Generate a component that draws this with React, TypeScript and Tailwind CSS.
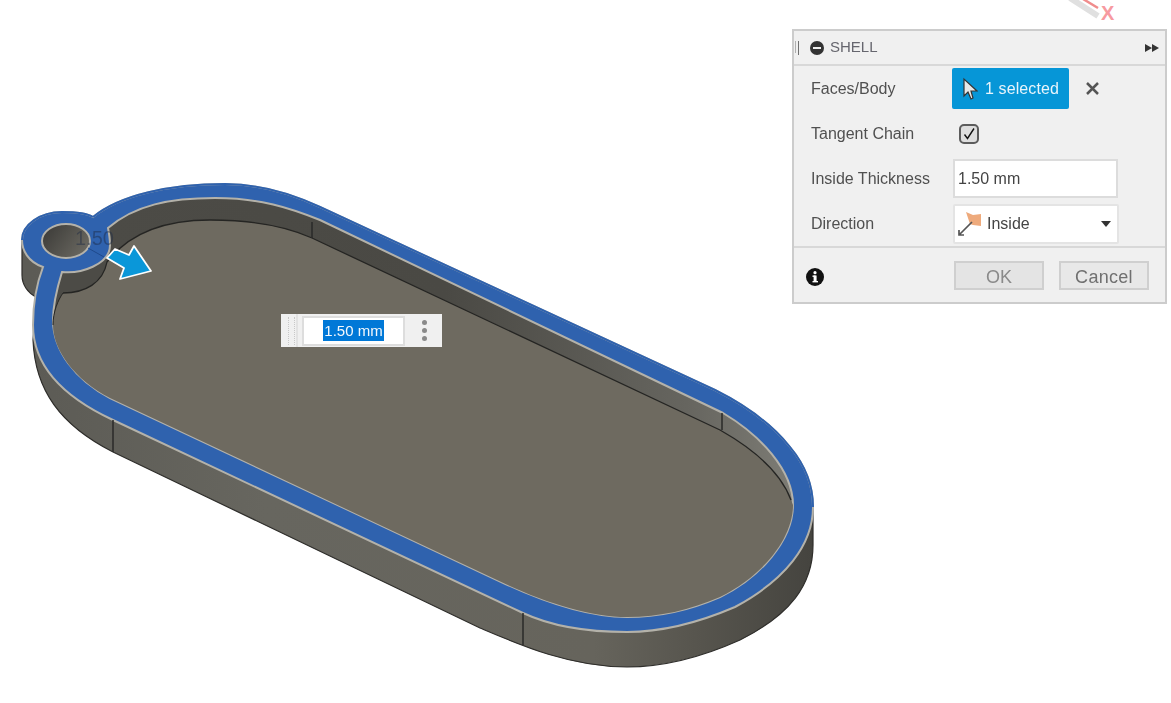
// App.tsx
const OUTER =
  "M93 217C120 195 170 184 225 184C260 184 290 193 320 207L715 390C745 405 770 422 790 447C805 465 813 485 813 507C813 545 785 580 735 607C700 622 665 632 627 632C590 632 555 628 523 613L113 420C70 400 33 370 33 325C33 300 38 280 43 267C28 262 22 250 22 240C22 225 40 212 62 212C75 212 87 213 93 217Z";
const INNER =
  "M108 228C135 205 170 198 215 198C260 198 290 208 320 220L723 413C760 435 793 470 793 505C793 540 760 578 720 597C690 610 660 617 627 617C590 617 545 603 497 580L110 398C75 380 53 350 53 320C53 305 58 285 62 272C80 274 110 265 110 245C110 238 109 233 108 228Z";
const FLOOR =
  "M53 325C53 312 58 300 63 293C85 293 103 283 107 262C130 232 165 220 210 220C250 220 285 226 312 238L720 430C750 447 780 470 793 505C793 540 760 578 720 597C690 610 660 617 627 617C590 617 545 603 497 580L110 398C75 380 53 350 53 325Z";
const WALL =
  "M22 240L22 275C22 285 28 293 36 297L33 340C35 390 60 425 113 452L480 628C520 645 570 667 627 667C660 667 700 658 740 640C790 615 813 585 813 545L813 507L400 300L60 220Z";

function KeyTag() {
  return (
    <svg className="absolute inset-0 blur-[0.6px]" width="1171" height="703" viewBox="0 0 1171 703">
      <defs>
        <linearGradient id="wall" gradientUnits="userSpaceOnUse" x1="30" y1="0" x2="813" y2="0">
          <stop offset="0" stopColor="#5c5b55" />
          <stop offset="0.3" stopColor="#67665f" />
          <stop offset="0.72" stopColor="#66645c" />
          <stop offset="0.85" stopColor="#57554e" />
          <stop offset="1" stopColor="#45443f" />
        </linearGradient>
        <linearGradient id="innerWall" gradientUnits="userSpaceOnUse" x1="100" y1="0" x2="790" y2="0">
          <stop offset="0" stopColor="#4c4b46" />
          <stop offset="0.5" stopColor="#4a4944" />
          <stop offset="0.85" stopColor="#66655f" />
          <stop offset="1" stopColor="#7c7b74" />
        </linearGradient>
        <linearGradient id="hole" gradientUnits="userSpaceOnUse" x1="45" y1="226" x2="88" y2="258">
          <stop offset="0" stopColor="#3c3b38" />
          <stop offset="1" stopColor="#6f6d65" />
        </linearGradient>
      </defs>

      {/* axis */}
      <path d="M1070 -2L1098 16" stroke="#e0e0e0" strokeWidth="6" fill="none" />
      <path d="M1083 -1L1098 8" stroke="#f08c8c" strokeWidth="2.5" fill="none" />

      {/* body */}
      <path d={WALL} fill="url(#wall)" stroke="#2f2e2b" strokeWidth="1.2" />
      <path d={OUTER} fill="#2f62ae" stroke="#b4b2aa" strokeWidth="2" />
      <path d="M93 217C120 195 170 184 225 184C260 184 290 193 320 207L715 390C745 405 770 422 790 447C805 465 813 485 813 507" fill="none" stroke="#2f62ae" strokeWidth="2" />
      <path d="M22 240C22 225 40 212 62 212C75 212 87 213 93 217" fill="none" stroke="#2f62ae" strokeWidth="2" />
      <path d={INNER} fill="url(#innerWall)" stroke="#b4b2aa" strokeWidth="2" />
      <path d={FLOOR} fill="#6e6a60" />
      <path d="M63 293C85 293 103 283 107 262C130 232 165 220 210 220C250 220 285 226 312 238L720 430C750 447 780 470 791 500" fill="none" stroke="#252523" strokeWidth="1.3" />
      <path d="M53 325C53 312 58 300 63 293" fill="none" stroke="#252523" strokeWidth="1" />

      {/* seams */}
      <path d="M113 420V452M523 613V645" stroke="#2a2a28" strokeWidth="1.5" />
      <path d="M312 222V238M722 413V430" stroke="#2a2a28" strokeWidth="1.5" />

      {/* hole */}
      <ellipse cx="66" cy="241" rx="24" ry="17" fill="url(#hole)" stroke="#b4b2aa" strokeWidth="2" />

      {/* dimension leader */}
      <path d="M88 248L104 257" stroke="#1f4a8c" strokeWidth="1" />
      <text x="75" y="245" fontFamily="Liberation Sans, sans-serif" fontSize="20" fill="#1d2a44" opacity="0.45">
        1.50
      </text>

      {/* drag arrow */}
      <path d="M107 258L115 249L129 255L134 246L151 271L120 279L124 268Z" fill="#0a97d9" stroke="#ffffff" strokeWidth="1.8" strokeLinejoin="round" />
    </svg>
  );
}

function Row({ label, children }: { label: string; children: React.ReactNode }) {
  return (
    <div className="flex h-[45px] items-center pl-[17px]">
      <span className="w-[142px] pt-px text-[16px] text-[#505050]">{label}</span>
      {children}
    </div>
  );
}

function ShellPanel() {
  return (
    <div className="relative mt-[29px] mr-1 flex h-[275px] w-[375px] flex-col border-2 border-[#cccccc] bg-[#f0f0f0] font-['Liberation_Sans',sans-serif]">
      {/* Header */}
      <div className="flex h-[35px] shrink-0 items-center border-b-2 border-[#d8d8d8] pr-[5px]">
        <div className="ml-[1px] mr-[11px] flex gap-[2px]">
          <span className="h-3 w-px bg-[#b0b0b0]" />
          <span className="h-[14px] w-px bg-[#707070]" />
        </div>
        <svg width="14" height="14" viewBox="0 0 14 14">
          <circle cx="7" cy="7" r="7" fill="#333333" />
          <rect x="3" y="6" width="8" height="2" fill="#f0f0f0" />
        </svg>
        <span className="ml-[6px] text-[15px] text-[#66666e]">SHELL</span>
        <svg className="ml-auto" width="16" height="10" viewBox="0 0 16 10">
          <path d="M1 1L8 5L1 9ZM8 1L15 5L8 9Z" fill="#333333" />
        </svg>
      </div>

      {/* Rows */}
      <div className="flex flex-col">
        <Row label="Faces/Body">
          <button className="-ml-px flex h-[41px] w-[117px] items-center rounded-[2px] bg-[#0696d7] pl-[10px] text-[16px] tracking-[0.1px] text-[#e8f4fb]">
            <svg width="16" height="24" viewBox="0 0 16 24">
              <path d="M2 2L2 19L6 15L9 22L11 21L9 14L15 14Z" fill="#e8e8e8" stroke="#333333" strokeWidth="1.2" />
            </svg>
            <span className="ml-[7px]">1 selected</span>
          </button>
          <svg className="ml-[16px]" width="15" height="15" viewBox="0 0 15 15">
            <path d="M2 2L13 13M13 2L2 13" stroke="#555555" strokeWidth="2.5" />
          </svg>
        </Row>
        <Row label="Tangent Chain">
          <span className="ml-[6px] flex h-5 w-5 items-center justify-center rounded-[5px] border-2 border-[#5c5c5c] bg-[#dedede]">
            <svg width="14" height="14" viewBox="0 0 14 14">
              <path d="M2.5 7.5L5.5 11.5L12 1.5" fill="none" stroke="#111111" strokeWidth="1.4" />
            </svg>
          </span>
        </Row>
        <Row label="Inside Thickness">
          <div className="flex h-[39px] w-[165px] items-center border-2 border-[#dcdcdc] bg-white pl-[3px] pt-px text-[16px] text-[#444444]">
            1.50 mm
          </div>
        </Row>
        <Row label="Direction">
          <div className="flex h-[40px] w-[166px] items-center rounded-[2px] border-2 border-[#e4e4e4] bg-white pl-[1px] pt-px text-[16px] text-[#444444]">
            <svg width="26" height="28" viewBox="0 0 26 28">
              <path d="M10 2L17 5L25 4L25 16L17 15L14 14Z" fill="#eeaa7c" />
              <path d="M16 12L3 25M3 20V25H8" fill="none" stroke="#555555" strokeWidth="1.7" />
            </svg>
            <span className="ml-[5px]">Inside</span>
            <svg className="ml-auto mr-[6px]" width="10" height="6" viewBox="0 0 10 6">
              <path d="M0 0H10L5 6Z" fill="#333333" />
            </svg>
          </div>
        </Row>
      </div>

      {/* Footer */}
      <div className="flex flex-1 items-center border-t-2 border-[#d8d8d8] pl-3">
        <svg className="mt-[3px]" width="18" height="18" viewBox="0 0 18 18">
          <circle cx="9" cy="9" r="9" fill="#111111" />
          <rect x="7.6" y="7.5" width="3" height="6.5" fill="#ffffff" />
          <rect x="6.5" y="7.5" width="3" height="1.4" fill="#ffffff" />
          <rect x="6.5" y="13" width="5.5" height="1.4" fill="#ffffff" />
          <circle cx="9" cy="4.7" r="1.6" fill="#ffffff" />
        </svg>
        <button className="ml-[130px] h-[29px] w-[90px] border-2 border-[#cfcfcf] bg-[#e4e4e4] pt-px text-[18px] text-[#8a8a8a]">OK</button>
        <button className="ml-[15px] h-[29px] w-[90px] border-2 border-[#cfcfcf] bg-[#e8e8e8] pt-px text-[18px] tracking-[0.3px] text-[#707070]">Cancel</button>
      </div>
    </div>
  );
}

function DimensionInput() {
  return (
    <div className="absolute left-[281px] top-[314px] flex h-[33px] w-[161px] items-center bg-[#f0f0f0] font-['Liberation_Sans',sans-serif] blur-[0.3px]">
      <div className="ml-[7px] h-[28px] w-[7px] border-x border-dotted border-[#c8c8c8]" />
      <div className="ml-[1px] h-full w-[2px] bg-[#e2e2e2]" />
      <div className="ml-[4px] flex h-[30px] w-[103px] items-center justify-center border-2 border-[#dddddd] bg-white">
        <span className="bg-[#0078d7] px-[1px] text-[15px] leading-[21px] text-[#f4f8fc]">1.50 mm</span>
      </div>
      <div className="ml-[17px] flex flex-col gap-[3px]">
        <span className="h-[5px] w-[5px] rounded-full bg-[#8a8a8a]" />
        <span className="h-[5px] w-[5px] rounded-full bg-[#8a8a8a]" />
        <span className="h-[5px] w-[5px] rounded-full bg-[#8a8a8a]" />
      </div>
    </div>
  );
}

export default function App() {
  return (
    <div className="relative flex h-[703px] w-[1171px] justify-end overflow-hidden bg-white">
      <KeyTag />
      <span className="absolute left-[1101px] top-[3px] font-['Liberation_Sans',sans-serif] text-[20px] font-bold leading-none text-[#f79aa0]">X</span>
      <DimensionInput />
      <div className="blur-[0.4px]">
        <ShellPanel />
      </div>
    </div>
  );
}
